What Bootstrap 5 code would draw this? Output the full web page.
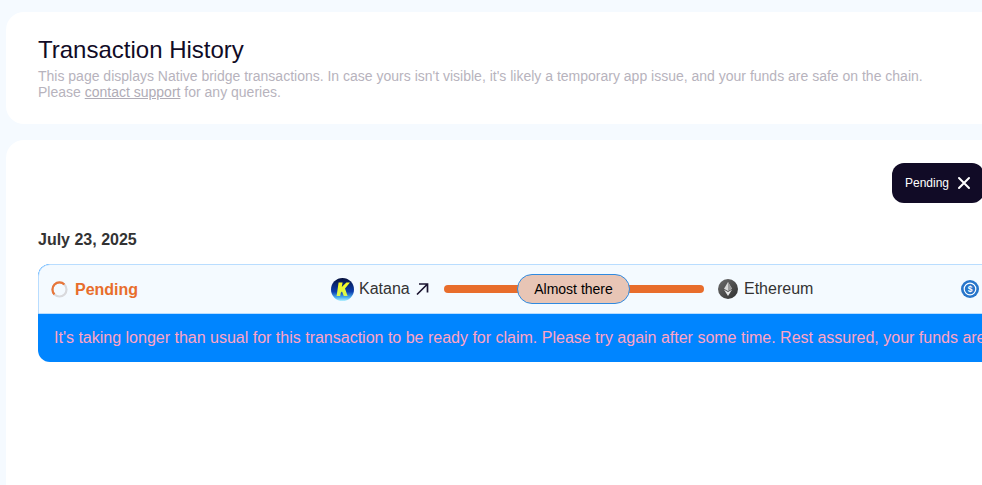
<!DOCTYPE html>
<html lang="en">
<head>
<meta charset="utf-8">
<title>Transaction History</title>
<link rel="stylesheet" href="https://cdn.jsdelivr.net/npm/bootstrap@5.3.0/dist/css/bootstrap.min.css">
<style>
html,body{height:485px;overflow:hidden}
body{background:#f5faff;font-family:"Liberation Sans",Arial,sans-serif;color:#333}
.shell{width:1200px;height:485px;padding:12px 0 0 6px;gap:16px}
.panel-top{background:#fff;border-radius:18px;height:112px;padding:24px 32px 0}
.page-title{font-size:24px;line-height:27px;font-weight:400;color:#110b26;margin:0 0 5px}
.page-sub{font-size:14px;line-height:16px;color:#b7b3bd;margin:0;width:900px}
.page-sub a{color:#b0acb6}
.panel-main{background:#fff;border-radius:18px 18px 0 0;flex:1;padding:23px 32px 0}
.filter-wrap{width:946px;height:40px}
.filter-chip{background:#110b26;color:#fff;border-radius:12px;height:40px;font-size:12px;padding:0 12px 0 13px;gap:8px;width:92px}
.day-label{font-size:16px;line-height:18px;font-weight:700;color:#333;margin:28px 0 15px}
.tx-box{border-radius:12px;overflow:hidden;width:1130px;background:#0085ff}
.tx-head{height:50px;background:#f4faff;border:1px solid #b9ddff;border-radius:12px 12px 0 0;padding-left:12px}
.status-col{width:280px;gap:7px;color:#e86d2c;font-weight:700;font-size:16px}
.status-col span{position:relative;top:1px}
.spin{width:17px;height:17px;display:block}
.route-name{font-size:16px;color:#333}
.route-a{width:113px;gap:5px}
.route-arrow{margin-left:0}
.track{width:260px;height:8px;background:#e86d2c;border-radius:4px;padding-left:73px}
.almost{width:113px;height:30px;background:#e8c5b5;border:1px solid #2f8ae0;border-radius:15px;font-size:14px;color:#000}
.route-b{margin-left:14px;width:243px;gap:6px}
.tx-msg{height:48px;color:#ffa3c4;font-size:16px;padding-left:16px;white-space:nowrap}
</style>
</head>
<body>
<div class="shell d-flex flex-column">
  <section class="panel-top">
    <h1 class="page-title">Transaction History</h1>
    <p class="page-sub">This page displays Native bridge transactions. In case yours isn't visible, it's likely a temporary app issue, and your funds are safe on the chain. Please <a href="#">contact support</a> for any queries.</p>
  </section>
  <section class="panel-main">
    <div class="filter-wrap d-flex">
      <div class="filter-chip d-flex align-items-center flex-shrink-0 ms-auto">
        <span>Pending</span>
        <svg width="14" height="14" viewBox="0 0 14 14" fill="none" stroke="#fff" stroke-width="2" stroke-linecap="round" class="flex-shrink-0"><path d="M2 2l10 10M12 2L2 12"/></svg>
      </div>
    </div>
    <div class="day-label">July 23, 2025</div>
    <div class="tx-box">
      <div class="tx-head d-flex align-items-center">
        <div class="status-col d-flex align-items-center flex-shrink-0">
          <svg class="spin" viewBox="0 0 17 17" fill="none" stroke-width="2.2"><circle cx="8.5" cy="8.5" r="7" stroke="#d9d9dc"/><path d="M13.4 3.5A7 7 0 0 0 3.5 13.4" stroke="#e8763a"/></svg>
          <span>Pending</span>
        </div>
        <div class="route-a d-flex align-items-center flex-shrink-0">
          <svg width="23" height="23" viewBox="0 0 23 23" class="flex-shrink-0"><defs><linearGradient id="kg" x1="0" y1="0" x2="0" y2="1"><stop offset="0" stop-color="#06103c"/><stop offset=".6" stop-color="#0c3fb0"/><stop offset=".85" stop-color="#4fb4f0"/><stop offset="1" stop-color="#b4f0ff"/></linearGradient><linearGradient id="ky" x1="0" y1="0" x2="0" y2="1"><stop offset="0" stop-color="#f8f820"/><stop offset="1" stop-color="#d8f850"/></linearGradient></defs><circle cx="11.5" cy="11.5" r="11.5" fill="url(#kg)"/><path d="M7.6 4.5h4l-.8 4.6L15.4 4.5H19l-5 6 2.6 7.5h-3.8l-1.8-4.6-1.2 1.4-.6 3.2H5.6z" fill="url(#ky)"/></svg>
          <span class="route-name">Katana</span>
          <svg class="route-arrow flex-shrink-0" width="14" height="14" viewBox="0 0 14 14" fill="none" stroke="#1a1430" stroke-width="1.7"><path d="M2 12.5L12 2.5M4 2h8.5v8.5"/></svg>
        </div>
        <div class="track d-flex align-items-center flex-shrink-0">
          <div class="almost d-flex align-items-center justify-content-center flex-shrink-0">Almost there</div>
        </div>
        <div class="route-b d-flex align-items-center flex-shrink-0">
          <svg width="20" height="20" viewBox="0 0 20 20" class="flex-shrink-0"><defs><linearGradient id="eg" x1="0" y1="0" x2="1" y2="1"><stop offset="0" stop-color="#6d6d6d"/><stop offset="1" stop-color="#2f2f2f"/></linearGradient></defs><circle cx="10" cy="10" r="10" fill="url(#eg)"/><path d="M10 3l-4 6.8L10 12l4-2.2z" fill="#d8d8d8"/><path d="M10 3v9l4-2.2z" fill="#9a9a9a"/><path d="M6 10.7L10 17l4-6.3-4 2.3z" fill="#e6e6e6"/></svg>
          <span class="route-name">Ethereum</span>
        </div>
        <svg width="18" height="18" viewBox="0 0 18 18" class="flex-shrink-0"><circle cx="9" cy="9" r="9" fill="#2775ca"/><circle cx="9" cy="9" r="5.8" fill="none" stroke="#fff" stroke-width="1.2"/><text x="9" y="12" font-size="8.5" font-weight="700" fill="#fff" text-anchor="middle" font-family="Liberation Sans">$</text></svg>
      </div>
      <div class="tx-msg d-flex align-items-center">It's taking longer than usual for this transaction to be ready for claim. Please try again after some time. Rest assured, your funds are safe on the chain.</div>
    </div>
  </section>
</div>
</body>
</html>
